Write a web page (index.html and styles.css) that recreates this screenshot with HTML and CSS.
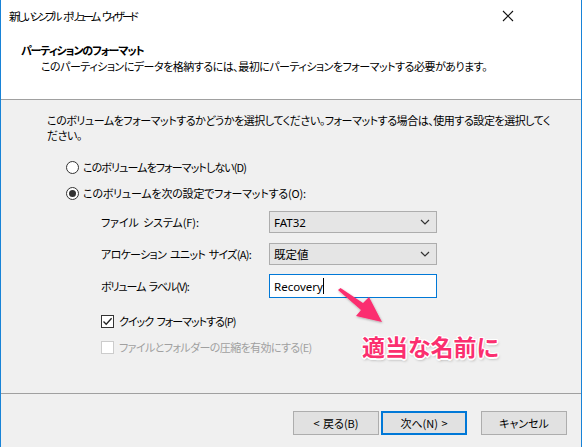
FILE: index.html
```html
<!DOCTYPE html>
<html lang="ja">
<head>
<meta charset="utf-8">
<link rel="stylesheet" href="styles.css">
</head>
<body>
<div class="window">
  <div class="header">
    <div class="titlebar">
      <span class="title">新しいシンプル ボリューム ウィザード</span>
      <svg class="close" width="12" height="12" viewBox="0 0 12 12"><path d="M1 1 L11 11 M11 1 L1 11" stroke="#111" stroke-width="1.1" fill="none"/></svg>
    </div>
    <div class="h-title">パーティションのフォーマット</div>
    <div class="h-sub">このパーティションにデータを格納するには、最初にパーティションをフォーマットする必要があります。</div>
  </div>
  <div class="content">
    <p class="intro">このボリュームをフォーマットするかどうかを選択してください。フォーマットする場合は、使用する設定を選択してください。</p>
    <div class="radio-row first"><span class="radio"></span><span class="t-r1">このボリュームをフォーマットしない(D)</span></div>
    <div class="radio-row second"><span class="radio checked"></span><span class="t-r2">このボリュームを次の設定でフォーマットする(O):</span></div>
    <div class="form">
      <div class="field">
        <span class="lbl t-f">ファイル システム(F):</span>
        <div class="select"><span class="sel-text">FAT32</span><svg width="10" height="6" viewBox="0 0 10 6"><path d="M1 1 L5 5 L9 1" stroke="#333" stroke-width="1.2" fill="none"/></svg></div>
      </div>
      <div class="field">
        <span class="lbl t-a">アロケーション ユニット サイズ(A):</span>
        <div class="select"><span class="sel-text jp">既定値</span><svg width="10" height="6" viewBox="0 0 10 6"><path d="M1 1 L5 5 L9 1" stroke="#333" stroke-width="1.2" fill="none"/></svg></div>
      </div>
      <div class="field">
        <span class="lbl t-v">ボリューム ラベル(V):</span>
        <div class="input"><span class="sel-text">Recovery</span><span class="caret"></span></div>
      </div>
      <div class="check-row quick"><span class="check"><svg width="11" height="11" viewBox="0 0 11 11"><path d="M1.5 5.5 L4.2 8.3 L9.6 2.2" stroke="#222" stroke-width="1.3" fill="none"/></svg></span><span class="t-q">クイック フォーマットする(P)</span></div>
      <div class="check-row disabled"><span class="check"></span><span class="t-c">ファイルとフォルダーの圧縮を有効にする(E)</span></div>
    </div>
    <svg class="arrow" width="60" height="45" viewBox="0 0 60 45">
      <defs><filter id="sh" x="-20%" y="-20%" width="140%" height="140%"><feDropShadow dx="0.5" dy="1" stdDeviation="0.8" flood-color="#000" flood-opacity="0.3"/></filter></defs>
      <path d="M8 8 L10.5 6 L33 21 L39 15 L52 40 L26 34 L31 28 Z" fill="#fb2f6f" filter="url(#sh)"/>
    </svg>
    <div class="note">適当な名前に</div>
  </div>
  <div class="footer">
    <button class="btn">&lt; 戻る(B)</button>
    <button class="btn default">次へ(N) &gt;</button>
    <button class="btn cancel">キャンセル</button>
  </div>
</div>
</body>
</html>
```

FILE: styles.css
```css
* { box-sizing: border-box; }
html, body { margin: 0; padding: 0; }
body {
  font-family: "Noto Sans CJK JP", "Noto Sans", sans-serif;
  font-size: 11px;
  font-feature-settings: "palt";
  word-spacing: 1px;
  color: #000;
  background: #f0f0f0;
}
.window {
  width: 582px;
  height: 447px;
  border-left: 1px solid #1883d7;
  border-right: 1px solid #1883d7;
  background: #f0f0f0;
  position: relative;
  display: flex;
  flex-direction: column;
}
.header {
  background: #fff;
  height: 100px;
  border-bottom: 1px solid #a0a0a0;
  flex: none;
}
.titlebar {
  height: 32px;
  display: flex;
  align-items: center;
  justify-content: space-between;
  padding: 0 67px 0 8px;
}
.title { line-height: 16px; letter-spacing: -2.9px; word-spacing: 4px; white-space: nowrap; }
.h-title {
  margin: 10px 0 0 20px;
  font-weight: bold;
  line-height: 16px;
  letter-spacing: -1.1px;
}
.h-sub {
  margin: 0 0 0 40px;
  line-height: 16px;
  letter-spacing: -0.5px;
  white-space: nowrap;
}
.content {
  flex: 1;
  position: relative;
  padding: 13px 0 0 46px;
  border-bottom: 1px solid #a0a0a0;
}
.intro {
  margin: 0;
  width: 508px;
  line-height: 15px;
  letter-spacing: -0.45px;
}
.radio-row {
  display: flex;
  align-items: center;
  height: 16px;
  margin: 0 0 0 19px;
  white-space: nowrap;
}
.radio-row.first { margin-top: 16px; }
.radio-row.second { margin-top: 10px; }
.t-r1 { letter-spacing: -0.9px; }
.t-r2 { letter-spacing: -0.2px; }
.radio {
  width: 13px;
  height: 13px;
  border: 1px solid #333;
  border-radius: 50%;
  background: #fff;
  margin-right: 4px;
  display: flex;
  align-items: center;
  justify-content: center;
  flex: none;
}
.radio.checked::after {
  content: "";
  width: 7px;
  height: 7px;
  border-radius: 50%;
  background: #333;
}
.form {
  margin: 5px 0 0 54px;
}
.field {
  display: flex;
  align-items: center;
  height: 32px;
}
.lbl { width: 168px; white-space: nowrap; flex: none; }
.t-f { letter-spacing: -0.1px; word-spacing: 2px; }
.t-a { letter-spacing: -0.7px; word-spacing: 2px; }
.t-v { letter-spacing: -1.1px; word-spacing: 2px; }
.select {
  width: 168px;
  height: 22px;
  background: #e5e5e5;
  border: 1px solid #adadad;
  display: flex;
  align-items: center;
  justify-content: space-between;
  padding: 0 6px 0 4px;
}
.sel-text { font-family: "Noto Sans", sans-serif; font-size: 11.5px; }
.sel-text.jp { font-family: "Noto Sans CJK JP", sans-serif; font-size: 11.5px; }
.input {
  width: 168px;
  height: 24px;
  background: #fff;
  border: 1px solid #0078d7;
  display: flex;
  align-items: center;
  padding: 0 4px;
}
.caret {
  width: 1px;
  height: 16px;
  background: #000;
}
.check-row {
  display: flex;
  align-items: center;
  height: 26px;
  white-space: nowrap;
}
.check-row.quick { margin-top: 6px; }
.t-q { letter-spacing: -1px; word-spacing: 2px; }
.t-c { letter-spacing: -0.6px; }
.check {
  width: 13px;
  height: 13px;
  border: 1px solid #333;
  background: #fff;
  margin-right: 5px;
  display: flex;
  align-items: center;
  justify-content: center;
  flex: none;
}
.disabled { color: #a0a0a0; }
.disabled .check { border-color: #cccccc; }
.arrow {
  position: absolute;
  left: 329px;
  top: 182px;
}
.note {
  position: absolute;
  left: 361px;
  top: 229px;
  font-size: 23px;
  font-weight: bold;
  letter-spacing: 0;
  color: #fb2f6f;
  text-shadow: -1px -1px 0 #fff, 1px -1px 0 #fff, -1px 1px 0 #fff, 1px 1px 0 #fff, 0 -1.5px 0 #fff, 0 1.5px 0 #fff, -1.5px 0 0 #fff, 1.5px 0 0 #fff, 1px 2px 3px rgba(0,0,0,0.35);
}
.footer {
  height: 53px;
  flex: none;
  display: flex;
  justify-content: flex-end;
  align-items: flex-start;
  padding: 17px 14px 0 0;
}
.btn {
  width: 86px;
  height: 24px;
  background: #e1e1e1;
  border: 1px solid #adadad;
  font-family: inherit;
  font-size: 11px;
  font-feature-settings: "palt";
  word-spacing: 1px;
  padding: 0;
  color: #000;
}
.btn + .btn { margin-left: 2px; }
.btn.default { border: 2px solid #0078d7; }
.btn.cancel { margin-left: 14px; }
```
